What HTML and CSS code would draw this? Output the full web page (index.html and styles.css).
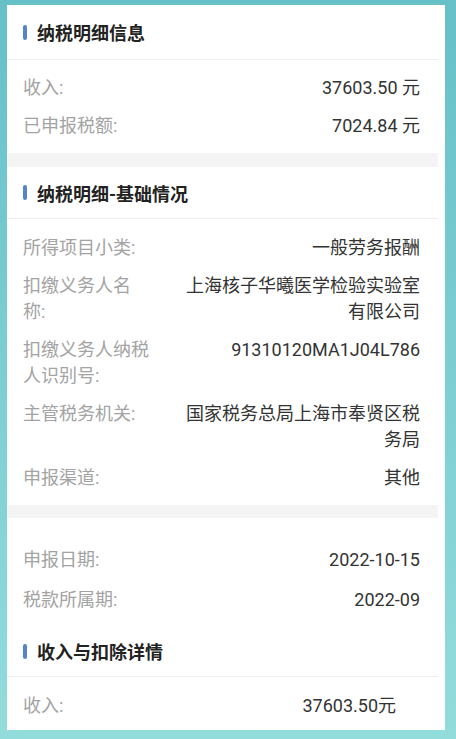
FILE: index.html
```html
<!DOCTYPE html>
<html lang="zh-CN">
<head>
  <meta charset="UTF-8" />
  <title>纳税明细</title>
  <link rel="stylesheet" href="styles.css">
</head>
<body>
  <div class="frame">
    <div class="sheet">
      <div class="block-head first"><span class="mark"></span>纳税明细信息</div>
      <div class="rows">
        <div class="row"><span class="label">收入:</span><span class="value">37603.50 元</span></div>
        <div class="row"><span class="label">已申报税额:</span><span class="value">7024.84 元</span></div>
      </div>

      <div class="band"></div>

      <div class="block-head"><span class="mark"></span>纳税明细-基础情况</div>
      <div class="rows">
        <div class="row"><span class="label">所得项目小类:</span><span class="value">一般劳务报酬</span></div>
        <div class="row"><span class="label">扣缴义务人名称:</span><span class="value">上海核子华曦医学检验实验室有限公司</span></div>
        <div class="row"><span class="label">扣缴义务人纳税人识别号:</span><span class="value">91310120MA1J04L786</span></div>
        <div class="row"><span class="label">主管税务机关:</span><span class="value">国家税务总局上海市奉贤区税务局</span></div>
        <div class="row"><span class="label">申报渠道:</span><span class="value">其他</span></div>
      </div>

      <div class="band short"></div>

      <div class="rows dates">
        <div class="row"><span class="label">申报日期:</span><span class="value">2022-10-15</span></div>
        <div class="row"><span class="label">税款所属期:</span><span class="value">2022-09</span></div>
      </div>

      <div class="block-head last"><span class="mark"></span>收入与扣除详情</div>
      <div class="rows detail">
        <div class="row"><span class="label">收入:</span><span class="value">37603.50元</span></div>
      </div>
    </div>
  </div>
</body>
</html>
```

FILE: styles.css
```css
body {
  margin: 0;
  height: 739px;
  overflow: hidden;
  font-family: Roboto, "Noto Sans CJK SC", sans-serif;
  background: linear-gradient(to bottom, #66c0c8, #93dcdc);
}

.frame {
  margin: 5px 11px 0 7px;
  height: 725px;
  background: #fff;
  overflow: hidden;
}

.sheet {
  margin-right: 7px;
}

.block-head {
  display: flex;
  align-items: center;
  height: 51px;
  padding-left: 16px;
  border-bottom: 1px solid #efefef;
  font-size: 18px;
  font-weight: 700;
  color: #222;
}

.block-head.first {
  height: 54px;
}

.block-head.last {
  height: 50px;
}

.mark {
  width: 4px;
  height: 15px;
  margin-right: 10px;
  border-radius: 2px;
  background: #5584c9;
}

.rows {
  padding: 9px 18px 8px 16px;
}

.block-head + .rows {
  padding-top: 10px;
}

.block-head.first + .rows {
  padding-top: 9px;
}

.row {
  display: flex;
  padding: 6px 0;
  font-size: 18px;
  line-height: 26px;
}

.label {
  flex-shrink: 0;
  width: 128px;
  margin-right: 34px;
  color: #a3a3a3;
}

.value {
  flex: 1;
  text-align: right;
  color: #333;
}

.dates {
  padding-top: 22px;
  padding-bottom: 6px;
}

.dates .row {
  padding: 7px 0;
}

.detail {
  padding-right: 42px;
}

.band {
  height: 14px;
  background: #f4f4f4;
}

.band.short {
  height: 13px;
}
```
